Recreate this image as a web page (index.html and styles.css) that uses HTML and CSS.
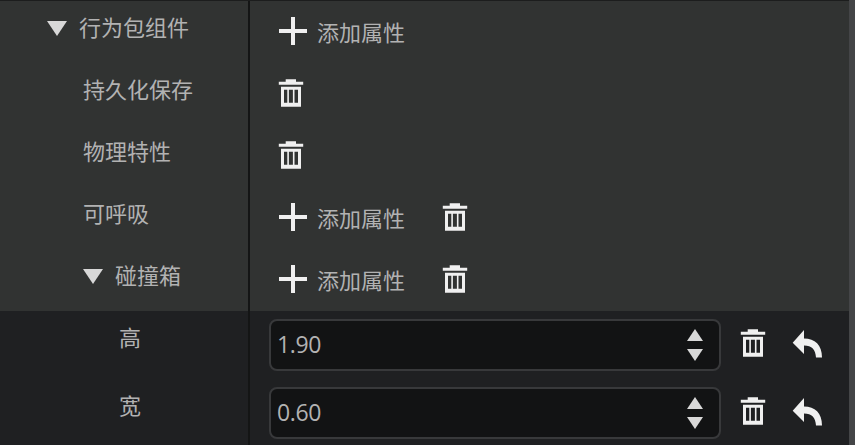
FILE: index.html
```html
<!DOCTYPE html>
<html lang="zh-CN">
<head>
<meta charset="utf-8">
<title>行为包组件</title>
<link rel="stylesheet" href="styles.css">
</head>
<body>
<svg class="defs" width="0" height="0" aria-hidden="true">
  <symbol id="plus" viewBox="0 0 28 28"><path d="M12 0h4v12h12v4H16v12h-4V16H0v-4h12z"/></symbol>
  <symbol id="trash" viewBox="0 0 26 28"><path fill-rule="evenodd" d="M7.700 .3h10.300v2.500h7.200v3H.8v-3h6.900zM3 7.700h20v20H3zM6 10.700v13h3.300V10.700zM10.900 10.700v13h4V10.700zM16.500 10.700v13h3.500V10.700z"/></symbol>
  <symbol id="undo" viewBox="0 0 30 28"><path d="M12 0v8.500C23 8.500 30 15 30 27.500h-6C23.500 19.500 20 15.500 12 15.500V24L.7 12.700z"/></symbol>
</svg>
<main class="panel">
  <div class="tree">
    <div class="row">
      <div class="label level0"><i class="caret"></i><span>行为包组件</span></div>
      <div class="value"><button class="add"><svg class="plus"><use href="#plus"/></svg><span>添加属性</span></button></div>
    </div>
    <div class="row">
      <div class="label level1">持久化保存</div>
      <div class="value"><svg class="trash"><use href="#trash"/></svg></div>
    </div>
    <div class="row">
      <div class="label level1">物理特性</div>
      <div class="value"><svg class="trash"><use href="#trash"/></svg></div>
    </div>
    <div class="row">
      <div class="label level1">可呼吸</div>
      <div class="value"><button class="add"><svg class="plus"><use href="#plus"/></svg><span>添加属性</span></button><svg class="trash"><use href="#trash"/></svg></div>
    </div>
    <div class="row">
      <div class="label level1"><i class="caret"></i><span>碰撞箱</span></div>
      <div class="value"><button class="add"><svg class="plus"><use href="#plus"/></svg><span>添加属性</span></button><svg class="trash"><use href="#trash"/></svg></div>
    </div>
    <div class="row field">
      <div class="label level2">高</div>
      <div class="value">
        <div class="number"><span class="digits">1.90</span><span class="spin"><i class="up"></i><i class="down"></i></span></div>
        <svg class="trash"><use href="#trash"/></svg><svg class="undo"><use href="#undo"/></svg>
      </div>
    </div>
    <div class="row field">
      <div class="label level2">宽</div>
      <div class="value">
        <div class="number"><span class="digits">0.60</span><span class="spin"><i class="up"></i><i class="down"></i></span></div>
        <svg class="trash"><use href="#trash"/></svg><svg class="undo"><use href="#undo"/></svg>
      </div>
    </div>
  </div>
  <div class="scrollbar"></div>
</main>
</body>
</html>
```
FILE: styles.css
```css
* { box-sizing: border-box; }
body {
  margin: 0;
  overflow: hidden;
  background: #1f2022;
  color: #b2b2b2;
  font: 400 22px/30px "Noto Sans CJK SC", sans-serif;
}
.defs { display: block; }
.panel { display: flex; height: 445px; overflow: hidden; }
.tree { flex: 1; border-top: 1px solid #1c1d1d; }
.scrollbar { width: 6px; background: #444547; }
.row {
  display: grid;
  grid-template-columns: 250px 1fr;
  height: 62px;
  background: #313332;
}
.label {
  display: flex;
  align-items: flex-start;
  padding-top: 10px;
  border-right: 2px solid #141515;
}
.level0 { padding-left: 47px; }
.level1 { padding-left: 83px; }
.level2 { padding-left: 119px; }
.caret {
  width: 20px;
  height: 15px;
  margin: 10px 12px 0 0;
  background: #d8d8d8;
  clip-path: polygon(0 0, 100% 0, 50% 100%);
}
.value { display: flex; align-items: center; padding: 0 0 2px 28px; }
.add {
  display: flex;
  align-items: center;
  width: 164px;
  padding: 0;
  border: 0;
  background: none;
  color: inherit;
  font: inherit;
}
.add span { margin: 0 0 0 10px; }
svg { fill: #f0f0f0; flex: none; }
.plus { width: 28px; height: 28px; margin-left: 1px; }
.trash { width: 26px; height: 28px; }
.field { height: 68px; background: #1f2022; }
.field .value { padding: 0 0 0 19px; }
.number {
  display: flex;
  align-items: center;
  justify-content: space-between;
  width: 452px;
  height: 52px;
  padding: 0 16px 0 6px;
  border: 2px solid #38393b;
  border-radius: 8px;
  background: #121314;
  font: 400 23px/30px "Open Sans", "Noto Sans", sans-serif;
}
.digits { margin-bottom: 2px; letter-spacing: -0.4px; }
.spin { display: grid; gap: 8px; }
.up, .down { width: 16px; height: 12px; background: #d8d8d8; }
.up { clip-path: polygon(50% 0, 100% 100%, 0 100%); }
.down { clip-path: polygon(0 0, 100% 0, 50% 100%); }
.field .trash { margin: -4px 0 0 19px; }
.undo { width: 30px; height: 28px; margin: -3px 0 0 25.500px; }
```
